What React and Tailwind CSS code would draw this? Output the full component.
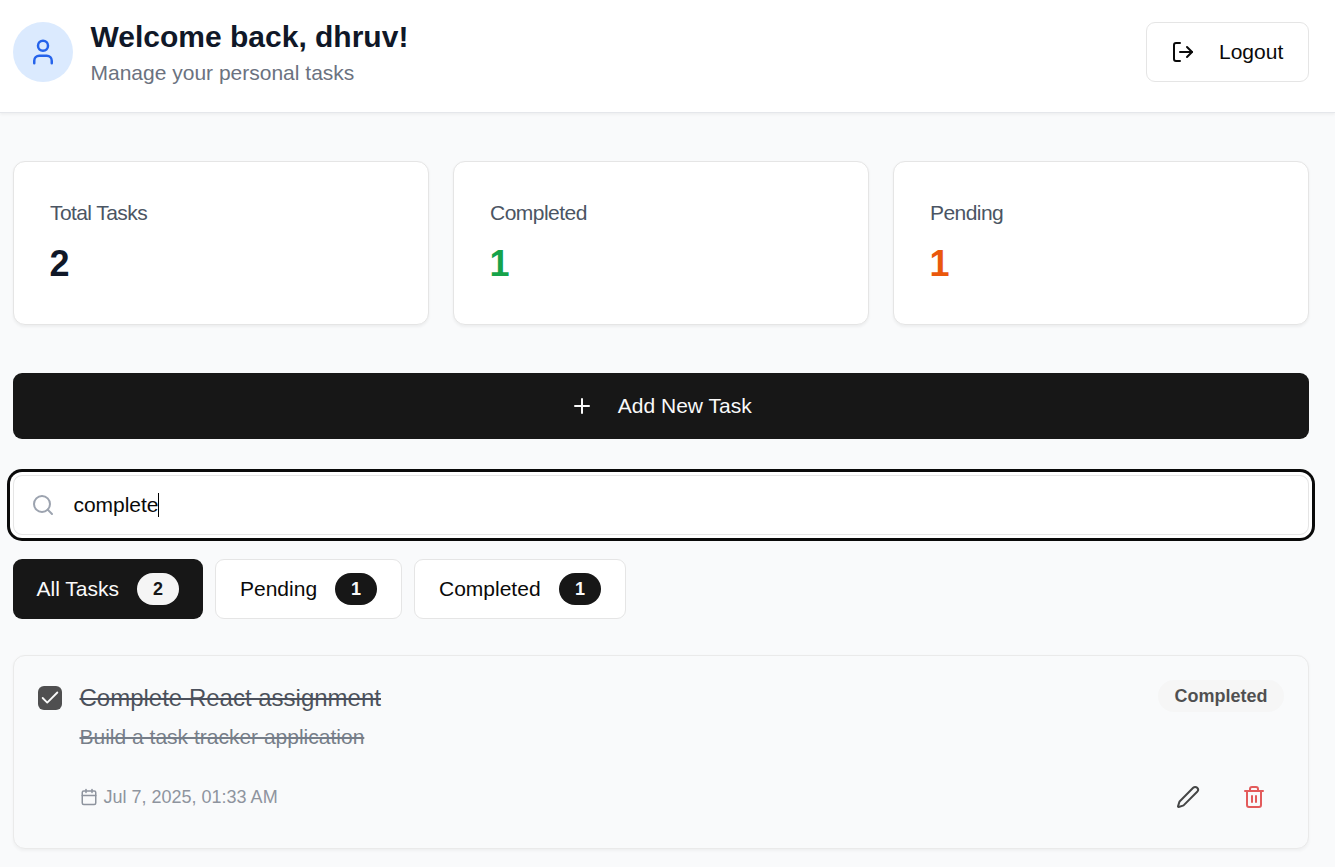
import { User, LogOut, Plus, Search, Calendar, Pen, Trash2, Check } from "lucide-react";

const stats = [
  { label: "Total Tasks", value: 2, color: "text-[#101828]", spacing: "tracking-[-0.58px]" },
  { label: "Completed", value: 1, color: "text-[#16a34a]", spacing: "tracking-[-0.52px]" },
  { label: "Pending", value: 1, color: "text-[#ea580c]", spacing: "tracking-[-0.56px]" },
];

function Filter({ label, count, active, width }) {
  return (
    <button className={`flex h-[60px] items-center justify-between rounded-[9px] pr-6 text-[21px] ${width} ${active ? "bg-[#171717] pl-[23.5px] text-[#fafafa]" : "border border-[#e5e5e5] bg-white pl-6 text-[#0a0a0a]"}`}>
      <span className="whitespace-nowrap">{label}</span>
      <span className={`flex h-8 w-[42px] items-center justify-center rounded-full text-[18px] font-bold ${active ? "bg-[#f5f5f5] text-[#171717]" : "bg-[#171717] text-[#fafafa]"}`}>{count}</span>
    </button>
  );
}

export default function App() {
  return (
    <div className="h-[867px] overflow-hidden bg-[#f9fafb] font-['Liberation_Sans',Arial,sans-serif] text-[#0a0a0a]">
      <header className="flex h-[113px] items-start justify-between border-b border-[#e5e7eb] bg-white pt-[22px] pr-[26px] pl-[13px] shadow-[0_1.5px_3px_0_rgb(0_0_0/0.05)]">
        <div className="flex gap-[17.5px]">
          <div className="flex size-[60px] items-center justify-center rounded-full bg-[#dbeafe] text-[#2563eb]">
            <User size={30} />
          </div>
          <div className="-mt-[3px]">
            <h1 className="text-[30px] leading-9 font-bold whitespace-nowrap text-[#101828]">Welcome back, dhruv!</h1>
            <p className="text-[21px] leading-9 whitespace-nowrap text-[#6b7280]">Manage your personal tasks</p>
          </div>
        </div>
        <button className="flex h-[60px] w-[163px] items-center gap-6 rounded-[9px] border border-[#e5e5e5] pl-6 text-[21px]">
          <LogOut size={24} />
          <span>Logout</span>
        </button>
      </header>

      <main className="pt-12 pr-[26px] pl-[13px]">
        <section className="grid grid-cols-3 gap-6">
          {stats.map((s) => (
            <div key={s.label} className="h-[164px] rounded-[12px] border border-[#e5e5e5] bg-white px-9 pt-9 shadow-[0_1.5px_3px_0_rgb(0_0_0/0.05)]">
              <p className={`text-[21px] leading-[30px] text-[#4b5563] ${s.spacing}`}>{s.label}</p>
              <p className={`mt-3 -ml-[0.5px] text-[36px] leading-[48px] font-bold ${s.color}`}>{s.value}</p>
            </div>
          ))}
        </section>

        <button className="mt-12 flex h-[66px] w-full items-center justify-center gap-[23.5px] rounded-[9px] bg-[#171717] text-[21px] text-[#fafafa]">
          <Plus size={24} />
          <span>Add New Task</span>
        </button>

        <div className="mt-9 flex h-[60px] items-center rounded-[9px] border border-[#e5e5e5] bg-white pl-[17px] text-[21px] ring-3 ring-[#0a0a0a] ring-offset-3 ring-offset-white">
          <Search size={24} className="text-[#9ca3af]" />
          <span className="ml-[18.5px] tracking-[-0.05px]">complete</span>
          <span className="h-6 w-px bg-black" />
        </div>

        <div className="mt-6 flex gap-3">
          <Filter label="All Tasks" count={2} active width="w-[190px]" />
          <Filter label="Pending" count={1} width="w-[187px]" />
          <Filter label="Completed" count={1} width="w-[212px]" />
        </div>

        <article className="mt-9 flex h-[194px] rounded-[12px] border border-[#e5e5e5] bg-[#f9fafb] px-6 pt-6 opacity-75 shadow-[0_1.5px_3px_0_rgb(0_0_0/0.05)]">
          <div className="mt-[6px] flex size-6 items-center justify-center rounded-[6px] bg-[#171717] text-[#fafafa]">
            <Check size={22} strokeWidth={2} />
          </div>
          <div className="ml-[17.5px] flex-1">
            <h2 className="text-[24px] leading-9 text-[#111827] line-through decoration-2">Complete React assignment</h2>
            <p className="mt-[6px] text-[21px] leading-[30px] text-[#4b5563] line-through decoration-2">Build a task tracker application</p>
            <div className="mt-[33px] flex items-center gap-[6px] text-[18px] leading-6 text-[#6b7280]">
              <Calendar size={18} />
              <span>Jul 7, 2025, 01:33 AM</span>
            </div>
          </div>
          <div className="flex flex-col items-end">
            <span className="flex h-8 w-[126px] items-center justify-center rounded-full bg-[#f5f5f5] text-[18px] font-bold text-[#171717]">Completed</span>
            <div className="mt-[73px] mr-[18px] flex gap-[42px]">
              <Pen size={24} />
              <Trash2 size={24} className="text-[#dc2626]" />
            </div>
          </div>
        </article>
      </main>
    </div>
  );
}
